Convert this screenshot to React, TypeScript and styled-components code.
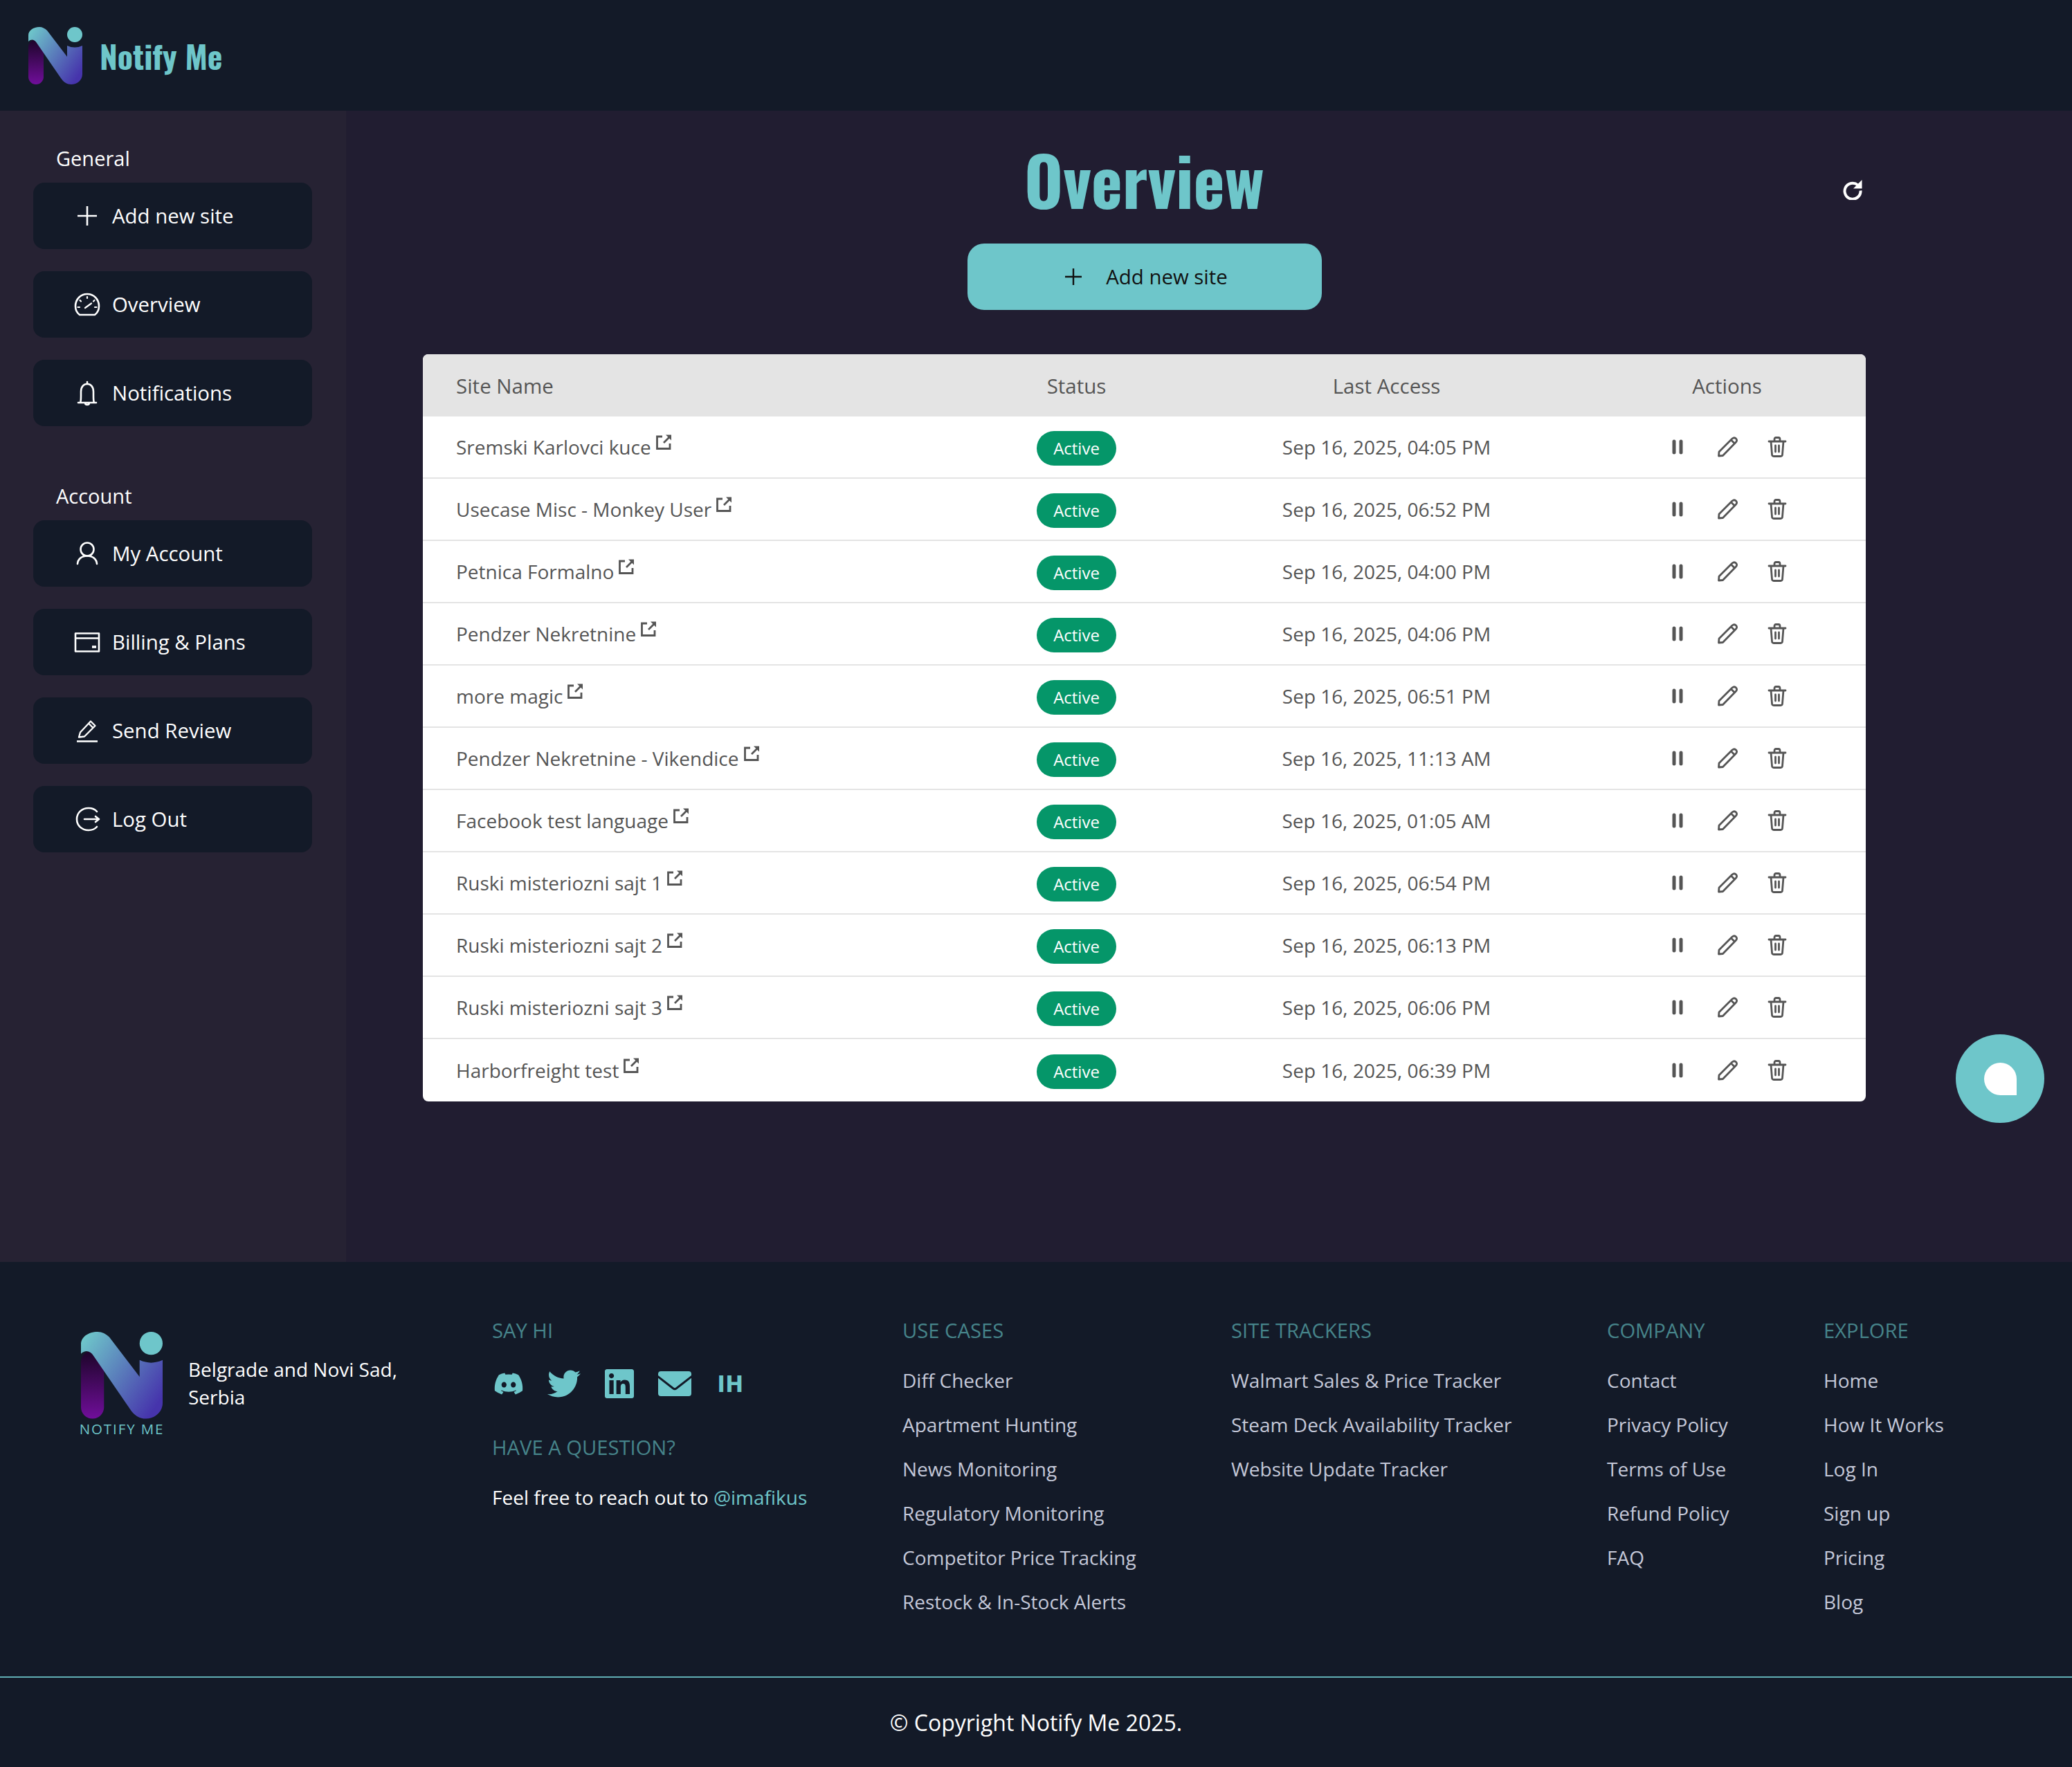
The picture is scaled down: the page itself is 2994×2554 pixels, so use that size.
import React from 'react';
import styled, { createGlobalStyle } from 'styled-components';
import { FaDiscord, FaTwitter, FaLinkedin } from 'react-icons/fa';

const Global = createGlobalStyle`
  html, body { margin: 0; padding: 0; background: #131a28; }
  body { font-family: "Open Sans", "Noto Sans", sans-serif; }
  * { box-sizing: border-box; }
  a { color: inherit; text-decoration: none; }
`;

const TEAL = '#6ec6ca';
const CONDENSED = '"Oswald", "Liberation Sans Narrow", "Roboto Condensed", "Roboto", sans-serif';

const Page = styled.div`
  width: 2994px;
  height: 2554px;
  display: flex;
  flex-direction: column;
  position: relative;
  overflow: hidden;
`;
const Header = styled.header`
  height: 160px;
  background: #131a28;
  display: flex;
  align-items: center;
  padding-left: 41px;
  gap: 25px;
  flex: none;
`;
const Brand = styled.span`
  font-family: ${CONDENSED};
  font-weight: 700;
  font-size: 46px;
  color: ${TEAL};
  line-height: 1;
`;
const Body = styled.div`
  display: flex;
  height: 1664px;
  flex: none;
  background: #211d31;
`;
const Sidebar = styled.aside`
  width: 500px;
  flex: none;
  background: #262233;
  padding: 49px 48px 0;
`;
const SectionTitle = styled.div`
  font-size: 29px;
  line-height: 40px;
  color: #fff;
  padding-left: 33px;
  margin-bottom: 15px;
`;
const NavList = styled.nav`
  display: flex;
  flex-direction: column;
  gap: 32px;
  margin-bottom: 81px;
`;
const NavButton = styled.a`
  height: 96px;
  width: 403px;
  background: #131a28;
  border-radius: 16px;
  display: flex;
  align-items: center;
  padding-left: 54px;
  gap: 12px;
  color: #fff;
  font-size: 29.4px;
`;
const NavIcon = styled.svg`
  width: 48px;
  height: 48px;
  flex: none;
  fill: none;
  stroke: #fff;
  stroke-width: 2.6;
  stroke-linecap: round;
  stroke-linejoin: round;
`;
const Main = styled.main`
  flex: 1;
  padding: 0 298px 0 111px;
  display: flex;
  flex-direction: column;
  align-items: center;
`;
const TitleRow = styled.div`
  width: 100%;
  height: 192px;
  padding-top: 6px;
  display: flex;
  align-items: center;
  justify-content: center;
  position: relative;
`;
const Title = styled.h1`
  margin: 0;
  font-family: ${CONDENSED};
  font-weight: 700;
  font-size: 96px;
  line-height: 1;
  color: ${TEAL};
`;
const Refresh = styled.svg`
  position: absolute;
  right: 4px;
  top: 97px;
  width: 32px;
  height: 32px;
  fill: none;
  stroke: #fff;
  stroke-width: 4;
`;
const AddButton = styled.a`
  width: 512px;
  height: 96px;
  padding-left: 5px;
  background: ${TEAL};
  border-radius: 24px;
  display: flex;
  align-items: center;
  justify-content: center;
  gap: 34px;
  color: #111;
  font-size: 29.4px;
  flex: none;
`;
const AddIcon = styled.svg`
  width: 26px;
  height: 26px;
  fill: none;
  stroke: #111;
  stroke-width: 2.4;
`;
const Table = styled.div`
  width: 100%;
  margin-top: 64px;
  background: #fff;
  border-radius: 8px;
  overflow: hidden;
`;
const Grid = styled.div`
  display: grid;
  grid-template-columns: 788px 313px 583px 401px;
  align-items: center;
  color: #555;
  font-size: 28px;
`;
const HeadRow = styled(Grid)`
  height: 90px;
  background: #e4e4e4;
  font-size: 29.5px;
`;
const Row = styled(Grid)`
  height: 90px;
  border-bottom: 2px solid #e4e4e4;
  &:last-child { border-bottom: 0; }
`;
const NameCell = styled.div`
  padding-left: 48px;
  display: flex;
  align-items: center;
  gap: 6px;
`;
const CenterCell = styled.div`
  text-align: center;
  display: flex;
  justify-content: center;
`;
const ExtIcon = styled.svg`
  width: 24px;
  height: 24px;
  margin-top: -14px;
  fill: none;
  stroke: #555;
  stroke-width: 2.8;
  flex: none;
`;
const Badge = styled.span`
  width: 115px;
  height: 50px;
  margin-top: 3px;
  border-radius: 25px;
  background: #059669;
  color: #fff;
  font-size: 24px;
  display: flex;
  align-items: center;
  justify-content: center;
`;
const Actions = styled.div`
  display: flex;
  justify-content: center;
  gap: 40px;
`;
const ActionIcon = styled.svg`
  width: 32px;
  height: 32px;
  fill: none;
  stroke: #555;
  stroke-width: 2.8;
  stroke-linecap: round;
  stroke-linejoin: round;
`;
const Chat = styled.div`
  position: absolute;
  left: 2826px;
  top: 1495px;
  width: 128px;
  height: 128px;
  border-radius: 50%;
  background: ${TEAL};
  display: flex;
  align-items: center;
  justify-content: center;
`;
const ChatBubble = styled.div`
  width: 47px;
  height: 47px;
  background: #fff;
  border-radius: 50% 50% 0 50%;
`;
const Footer = styled.footer`
  flex: 1;
  background: #131a28;
  display: flex;
  flex-direction: column;
`;
const Columns = styled.div`
  height: 601px;
  display: flex;
  border-bottom: 2px solid ${TEAL}dd;
  padding-top: 79px;
`;
const BrandCol = styled.div`
  width: 711px;
  flex: none;
  padding: 22px 0 0 116px;
  display: flex;
  gap: 36px;
`;
const BrandMark = styled.div`
  display: flex;
  flex-direction: column;
  align-items: center;
  width: 120px;
`;
const BrandCaption = styled.div`
  font-size: 20.5px;
  line-height: 26px;
  letter-spacing: 1.9px;
  color: ${TEAL};
  white-space: nowrap;
  margin-top: 1px;
`;
const Address = styled.div`
  color: #fff;
  font-size: 28px;
  line-height: 40px;
  margin-top: 34px;
`;
const Col = styled.div<{ $w: number }>`
  width: ${(p) => p.$w}px;
  flex: none;
`;
const ColHeading = styled.div<{ $gap: number }>`
  color: #46848a;
  font-size: 29.2px;
  line-height: 40px;
  margin-bottom: ${(p) => p.$gap}px;
`;
const ColLink = styled.a`
  display: block;
  color: #c4c8d8;
  font-size: 28px;
  line-height: 64px;
`;
const Socials = styled.div`
  display: flex;
  align-items: center;
  height: 56px;
  padding-left: 2px;
  color: ${TEAL};
  margin-bottom: 44px;
`;
const MailSvg = styled.svg`
  width: 48px;
  height: 36px;
  flex: none;
  margin-left: 32px;
`;
const Ih = styled.span`
  font-family: "Roboto", sans-serif;
  font-weight: 900;
  font-size: 34px;
  letter-spacing: 2px;
  margin-left: 38px;
`;
const Question = styled.div`
  color: #fff;
  font-size: 28px;
  line-height: 40px;
`;
const Handle = styled.a`
  color: ${TEAL};
`;
const Copyright = styled.div`
  flex: 1;
  display: flex;
  align-items: center;
  justify-content: center;
  color: #fff;
  font-size: 32px;
`;

const Logo = ({ w, id }: { w: number; id: string }) => (
  <svg width={w} height={(w * 83) / 78} viewBox="0 0 78 83" style={{ flex: 'none' }}>
    <defs>
      <linearGradient id={id + 'a'} x1="0" y1="0" x2="0" y2="1">
        <stop offset="0" stopColor="#1c0528" />
        <stop offset="1" stopColor="#700e9a" />
      </linearGradient>
      <linearGradient id={id + 'b'} gradientUnits="userSpaceOnUse" x1="0" y1="10" x2="78" y2="62">
        <stop offset="0" stopColor="#6ec6ca" />
        <stop offset="1" stopColor="#4634ac" />
      </linearGradient>
    </defs>
    <rect x="0" y="18" width="22" height="65" rx="11" fill={`url(#${id}a)`} />
    <path
      d="M0 21V12C0 5 7 0 16 0C20 0 24 2 27 5L56 43V27Q67 32 78 27V68C78 77 70 83 62 83C56 83 51 80 47 74L12 23C9 18 4 17 0 21Z"
      fill={`url(#${id}b)`}
    />
    <circle cx="67" cy="11" r="11" fill="#6ec6ca" />
  </svg>
);

const PlusI = () => (
  <NavIcon viewBox="0 0 48 48"><path d="M24 10V38M10 24H38" strokeLinecap="butt" /></NavIcon>
);
const GaugeI = () => (
  <NavIcon viewBox="0 0 48 48">
    <path d="M13 39C9 36 7 31.500 7 26.500C7 16.500 14.500 9 24 9S41 16.500 41 26.500C41 31.500 39 36 35 39Z" />
    <path d="M21 29L30 22.500M24 13V15M13.500 18L15 19.500M34.500 18L33 19.500M10.500 28H13M35 28H37.500" strokeWidth="2.200" />
  </NavIcon>
);
const BellI = () => (
  <NavIcon viewBox="0 0 48 48">
    <path d="M11 38H37M14 38C15 36 15 33 15 28V22C15 15 19 11 24 11S33 15 33 22V28C33 33 33 36 34 38M24 8V11M21 38C21 42 27 42 27 38" />
  </NavIcon>
);
const UserI = () => (
  <NavIcon viewBox="0 0 48 48">
    <circle cx="24" cy="18" r="9.500" />
    <path d="M10 39C10.500 32 16 27.500 24 27.500S37.500 32 38 39" />
  </NavIcon>
);
const CardI = () => (
  <NavIcon viewBox="0 0 48 48" strokeLinejoin="miter">
    <path d="M7 11.500H41V37.500H7ZM7 18.500H41" strokeLinecap="butt" />
    <path d="M31 31H37" strokeWidth="3.600" strokeLinecap="butt" />
  </NavIcon>
);
const PenI = () => (
  <NavIcon viewBox="0 0 48 48">
    <path d="M9 39.500H39" strokeLinecap="butt" />
    <path d="M12 33.500L14 26.500L29 10.500L35.500 17L20 32.500ZM26 13.500L32.500 20" strokeWidth="2.300" />
  </NavIcon>
);
const LogoutI = () => (
  <NavIcon viewBox="0 0 48 48">
    <path d="M38 13C35 9.500 30 8 26 8C16 8 9 15 9 24S16 40 26 40C30 40 35 38.500 38 35" />
    <path d="M20 24H41M36 20L41 24L36 28" />
  </NavIcon>
);
const ExtI = () => (
  <ExtIcon viewBox="0 0 24 24">
    <path d="M10 4H2.500V21.500H21V14M12 13L21 4" />
    <path d="M15 1.500H23V9.500Z" fill="#555" stroke="none" />
  </ExtIcon>
);
const PauseI = () => (
  <ActionIcon viewBox="0 0 32 32"><path d="M11 8V24M21 8V24" strokeWidth="5" /></ActionIcon>
);
const PencilI = () => (
  <ActionIcon viewBox="0 0 32 32">
    <path d="M3.500 29L4 23L23 4C25 2.500 27 2.500 28.500 4C30 5.500 30 7.500 28.500 9L9.500 28.500ZM21.500 6L26.500 11" />
  </ActionIcon>
);
const TrashI = () => (
  <ActionIcon viewBox="0 0 32 32">
    <path d="M4 8H28M7 8L8.500 27C8.600 28.500 9.500 29.500 11 29.500H21C22.500 29.500 23.400 28.500 23.500 27L25 8M12 8V5C12 3.500 13 2.500 14 2.500H18C19 2.500 20 3.500 20 5V8M13.500 14V23M18.500 14V23" />
  </ActionIcon>
);
const MailI = () => (
  <MailSvg viewBox="0 0 48 36">
    <rect width="48" height="36" rx="4" fill="currentColor" />
    <path d="M-1 7L22 25Q24 26.500 26 25L49 7" fill="none" stroke="#131a28" strokeWidth="3" />
  </MailSvg>
);

const sites = [
  ['Sremski Karlovci kuce', 'Sep 16, 2025, 04:05 PM'],
  ['Usecase Misc - Monkey User', 'Sep 16, 2025, 06:52 PM'],
  ['Petnica Formalno', 'Sep 16, 2025, 04:00 PM'],
  ['Pendzer Nekretnine', 'Sep 16, 2025, 04:06 PM'],
  ['more magic', 'Sep 16, 2025, 06:51 PM'],
  ['Pendzer Nekretnine - Vikendice', 'Sep 16, 2025, 11:13 AM'],
  ['Facebook test language', 'Sep 16, 2025, 01:05 AM'],
  ['Ruski misteriozni sajt 1', 'Sep 16, 2025, 06:54 PM'],
  ['Ruski misteriozni sajt 2', 'Sep 16, 2025, 06:13 PM'],
  ['Ruski misteriozni sajt 3', 'Sep 16, 2025, 06:06 PM'],
  ['Harborfreight test', 'Sep 16, 2025, 06:39 PM'],
];

const general: [React.ReactNode, string][] = [
  [<PlusI />, 'Add new site'],
  [<GaugeI />, 'Overview'],
  [<BellI />, 'Notifications'],
];
const account: [React.ReactNode, string][] = [
  [<UserI />, 'My Account'],
  [<CardI />, 'Billing & Plans'],
  [<PenI />, 'Send Review'],
  [<LogoutI />, 'Log Out'],
];

const footerCols: { w: number; title: string; links: string[] }[] = [
  { w: 475, title: 'USE CASES', links: ['Diff Checker', 'Apartment Hunting', 'News Monitoring', 'Regulatory Monitoring', 'Competitor Price Tracking', 'Restock & In-Stock Alerts'] },
  { w: 543, title: 'SITE TRACKERS', links: ['Walmart Sales & Price Tracker', 'Steam Deck Availability Tracker', 'Website Update Tracker'] },
  { w: 313, title: 'COMPANY', links: ['Contact', 'Privacy Policy', 'Terms of Use', 'Refund Policy', 'FAQ'] },
  { w: 300, title: 'EXPLORE', links: ['Home', 'How It Works', 'Log In', 'Sign up', 'Pricing', 'Blog'] },
];

export default function App() {
  return (
    <Page>
      <Global />
      <Header>
        <Logo w={78} id="h" />
        <Brand>Notify Me</Brand>
      </Header>
      <Body>
        <Sidebar>
          <SectionTitle>General</SectionTitle>
          <NavList>
            {general.map(([icon, label]) => (
              <NavButton key={label}>{icon}{label}</NavButton>
            ))}
          </NavList>
          <SectionTitle>Account</SectionTitle>
          <NavList>
            {account.map(([icon, label]) => (
              <NavButton key={label}>{icon}{label}</NavButton>
            ))}
          </NavList>
        </Sidebar>
        <Main>
          <TitleRow>
            <Title>Overview</Title>
            <Refresh viewBox="0 0 32 32">
              <path d="M24.500 10.500A11.500 11.500 0 1 0 28.500 18.500" />
              <path d="M30.500 3V15.500H18Z" fill="#fff" stroke="none" />
            </Refresh>
          </TitleRow>
          <AddButton>
            <AddIcon viewBox="0 0 26 26"><path d="M13 1V25M1 13H25" /></AddIcon>
            Add new site
          </AddButton>
          <Table>
            <HeadRow>
              <NameCell>Site Name</NameCell>
              <CenterCell>Status</CenterCell>
              <CenterCell>Last Access</CenterCell>
              <CenterCell>Actions</CenterCell>
            </HeadRow>
            {sites.map(([name, date]) => (
              <Row key={name}>
                <NameCell>{name}<ExtI /></NameCell>
                <CenterCell><Badge>Active</Badge></CenterCell>
                <CenterCell>{date}</CenterCell>
                <CenterCell>
                  <Actions><PauseI /><PencilI /><TrashI /></Actions>
                </CenterCell>
              </Row>
            ))}
          </Table>
        </Main>
      </Body>
      <Footer>
        <Columns>
          <BrandCol>
            <BrandMark>
              <Logo w={118} id="f" />
              <BrandCaption>NOTIFY ME</BrandCaption>
            </BrandMark>
            <Address>Belgrade and Novi Sad,<br />Serbia</Address>
          </BrandCol>
          <Col $w={593}>
            <ColHeading $gap={29}>SAY HI</ColHeading>
            <Socials>
              <FaDiscord size={44} />
              <FaTwitter size={48} style={{ marginLeft: 34 }} />
              <FaLinkedin size={48} style={{ marginLeft: 32 }} />
              <MailI />
              <Ih>IH</Ih>
            </Socials>
            <ColHeading $gap={32}>HAVE A QUESTION?</ColHeading>
            <Question>Feel free to reach out to <Handle>@imafikus</Handle></Question>
          </Col>
          {footerCols.map((c) => (
            <Col $w={c.w} key={c.title}>
              <ColHeading $gap={20}>{c.title}</ColHeading>
              {c.links.map((l) => <ColLink key={l}>{l}</ColLink>)}
            </Col>
          ))}
        </Columns>
        <Copyright>© Copyright Notify Me 2025.</Copyright>
      </Footer>
      <Chat><ChatBubble /></Chat>
    </Page>
  );
}
